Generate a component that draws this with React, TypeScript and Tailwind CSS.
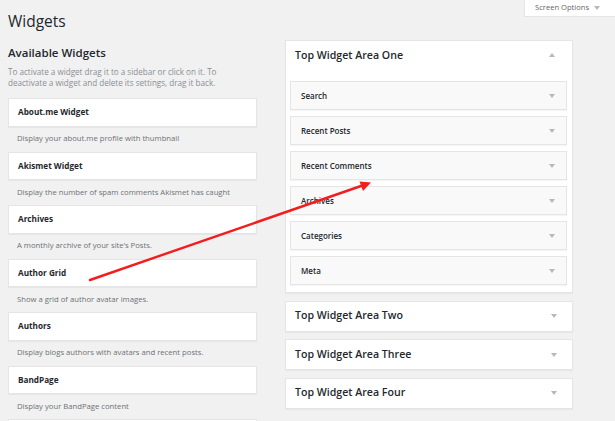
const available = [
  { title: "About.me Widget", desc: "Display your about.me profile with thumbnail" },
  { title: "Akismet Widget", desc: "Display the number of spam comments Akismet has caught" },
  { title: "Archives", desc: "A monthly archive of your site’s Posts." },
  { title: "Author Grid", desc: "Show a grid of author avatar images." },
  { title: "Authors", desc: "Display blogs authors with avatars and recent posts." },
  { title: "BandPage", desc: "Display your BandPage content" },
]

const areaOne = ["Search", "Recent Posts", "Recent Comments", "Archives", "Categories", "Meta"]
const otherAreas = ["Top Widget Area Two", "Top Widget Area Three", "Top Widget Area Four"]

function Caret({ up = false }: { up?: boolean }) {
  return (
    <svg width="6" height="4" viewBox="0 0 6 4" className="shrink-0">
      {up ? <path d="M0 4 L3 0 L6 4 Z" fill="#b4b9be" /> : <path d="M0 0 L6 0 L3 4 Z" fill="#b4b9be" />}
    </svg>
  )
}

export default function App() {
  return (
    <div
      className="relative w-[615px] h-[421px] overflow-hidden bg-[#f1f1f1] text-[#23282d]"
      style={{ fontFamily: '"Open Sans", "Noto Sans", sans-serif' }}
    >
      {/* Screen options tab */}
      <div className="absolute top-0 right-0 w-[91px] h-[17px] bg-white border-l border-b border-[#e5e5e5] flex items-center pl-[10px] gap-[5px] text-[7.6px] text-[#666]">
        Screen Options
        <Caret />
      </div>

      <div className="px-2">
        <h1 className="pt-[11px] h-[40px] text-[15.5px] leading-[20px] font-normal">Widgets</h1>

        <div className="flex gap-[28px]">
          {/* Available widgets */}
          <div className="w-[249px] shrink-0">
            <h2 className="pt-[5px] text-[11.5px] leading-[16px] font-semibold">Available Widgets</h2>
            <p className="mt-[5px] text-[8.1px] leading-[11px] text-[#8a8f94] whitespace-nowrap">
              To activate a widget drag it to a sidebar or click on it. To
              <br />
              deactivate a widget and delete its settings, drag it back.
            </p>
            <div className="mt-[10px] flex flex-col">
              {available.map((w) => (
                <div key={w.title}>
                  <div className="h-[28.5px] bg-white border border-[#e5e5e5] shadow-[0_1px_1px_rgba(0,0,0,0.04)] flex items-center px-[9px] text-[8.2px] font-bold">
                    {w.title}
                  </div>
                  <div className="h-[25px] flex items-center px-[9px] text-[7.7px] text-[#6c7176]">{w.desc}</div>
                </div>
              ))}
              <div className="h-[28.5px] bg-white border border-[#e5e5e5]" />
            </div>
          </div>

          {/* Sidebar areas */}
          <div className="w-[288px] shrink-0 flex flex-col gap-[7.5px]">
            <div className="bg-white border border-[#e5e5e5] shadow-[0_1px_1px_rgba(0,0,0,0.04)] px-[4px] pb-[7px]">
              <div className="h-[40px] flex items-start justify-between pt-[7px] pl-[5px] pr-[13px]">
                <span className="text-[10.6px] leading-[14px] font-semibold">Top Widget Area One</span>
                <span className="pt-[5px]">
                  <Caret up />
                </span>
              </div>
              <div className="flex flex-col gap-[6px] pr-[1px]">
                {areaOne.map((w) => (
                  <div
                    key={w}
                    className="h-[29px] bg-[#f9f9f9] border border-[#e5e5e5] shadow-[0_1px_1px_rgba(0,0,0,0.04)] flex items-center justify-between pl-[10px] pr-[11px] text-[8px] font-semibold"
                  >
                    {w}
                    <Caret />
                  </div>
                ))}
              </div>
            </div>
            {otherAreas.map((a) => (
              <div
                key={a}
                className="h-[31px] bg-white border border-[#e5e5e5] shadow-[0_1px_1px_rgba(0,0,0,0.04)] flex items-center justify-between pl-[9px] pr-[15px]"
              >
                <span className="text-[10.6px] font-semibold">{a}</span>
                <Caret />
              </div>
            ))}
          </div>
        </div>
      </div>

      {/* Red drag arrow */}
      <svg className="absolute inset-0 pointer-events-none" width="615" height="421" viewBox="0 0 615 421">
        <line x1="90" y1="280" x2="361" y2="186" stroke="#f21d1d" strokeWidth="2.4" strokeLinecap="round" />
        <path d="M371 182.5 L359.5 181.5 L363 191 Z" fill="#f21d1d" />
      </svg>
    </div>
  )
}
